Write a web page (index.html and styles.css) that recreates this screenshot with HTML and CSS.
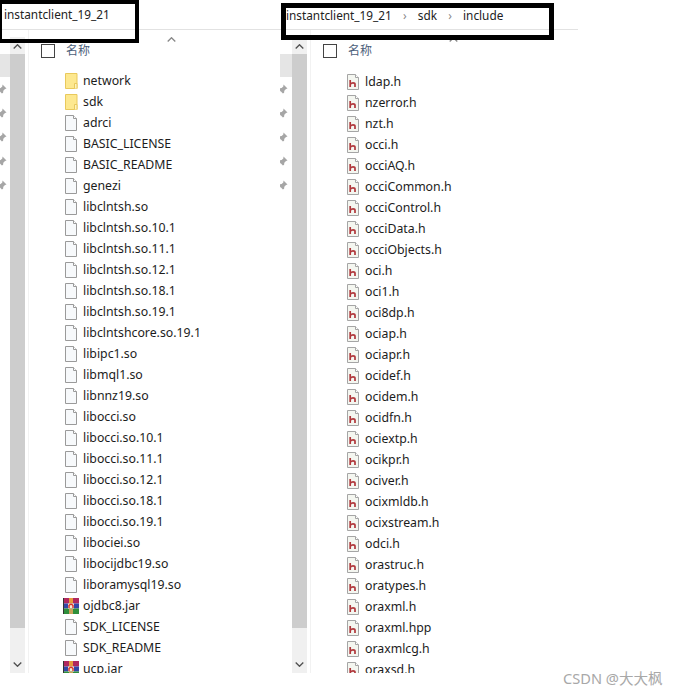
FILE: index.html
```html
<!DOCTYPE html>
<html lang="zh-CN">
<head>
  <meta charset="UTF-8">
  <title>instantclient_19_21</title>
  <link rel="stylesheet" href="styles.css">
</head>
<body>
  <!-- Shared icons -->
  <svg class="icon-defs" aria-hidden="true">
    <symbol id="i-folder" viewBox="0 0 16 16">
      <path d="M2.500 0.500h11.500v15h-11.500z" fill="#fde88f" stroke="#e9c95c"/>
      <path d="M11.500 15.500v-5h2.500v5" fill="#fdf3bf" stroke="#e9c95c"/>
    </symbol>
    <symbol id="i-file" viewBox="0 0 16 16">
      <path d="M2.500 0.500h8l3 3v12h-11z" fill="#f7f9fb" stroke="#9a9a9a"/>
      <path d="M10.500 0.500v3h3" fill="#fff" stroke="#9a9a9a"/>
    </symbol>
    <symbol id="i-header" viewBox="0 0 16 16">
      <path d="M2.500 0.500h8l3 3v12h-11z" fill="#f4f6f0" stroke="#a5a5a5"/>
      <path d="M10.500 0.500v3h3" fill="#fff" stroke="#a5a5a5"/>
      <path d="M5.200 6v7M5.500 10q1-1.200 2.500-1.200q2 0 2 1.500v2.700" fill="none" stroke="#b0383c" stroke-width="1.700"/>
    </symbol>
    <symbol id="i-rar" viewBox="0 0 16 16">
      <rect x="0" y="0" width="16" height="5.500" fill="#b0285f"/>
      <rect x="0" y="5.500" width="16" height="5" fill="#3346a8"/>
      <rect x="0" y="10.500" width="16" height="5.500" fill="#2f8f3c"/>
      <rect x="0" y="0" width="1" height="16" fill="#333"/>
      <rect x="6" y="0" width="4" height="5.500" fill="#e89a3c"/>
      <rect x="5" y="5.500" width="6" height="5" fill="#f6ecd6"/>
      <rect x="6" y="10.500" width="4" height="5.500" fill="#c9a25a"/>
      <path d="M6 10v-2.500q2-2.500 4 0v2.500" fill="none" stroke="#d9302a" stroke-width="1.400"/>
    </symbol>
    <symbol id="i-pin" viewBox="0 0 10 10">
      <path d="M5.500 0.500l4 4-1.500 .6-1.700 1.700-.2 2-1.200 .7-4-4 .7-1.200 2-.2 1.700-1.700z" fill="#a6a6a6"/>
      <path d="M2.500 6.500l-2.500 3" stroke="#a6a6a6" fill="none"/>
    </symbol>
    <symbol id="i-chev" viewBox="0 0 9 5">
      <path d="M0.700 4.500l3.800-3.800 3.800 3.800" fill="none" stroke="currentColor" stroke-width="1.300"/>
    </symbol>
  </svg>

  <div class="shot">
    <!-- Left window -->
    <section class="pane pane-main">
      <div class="pane-rule"></div>
      <div class="crumb crumb-main">
        <span>instantclient_19_21</span>
      </div>
      <div class="pane-body">
        <div class="nav-strip">
          <div class="nav-selected"></div>
          <svg class="pin"><use href="#i-pin"/></svg>
          <svg class="pin"><use href="#i-pin"/></svg>
          <svg class="pin"><use href="#i-pin"/></svg>
          <svg class="pin"><use href="#i-pin"/></svg>
          <svg class="pin"><use href="#i-pin"/></svg>
        </div>
        <div class="scrollbar">
          <div class="scroll-btn"><svg class="chev"><use href="#i-chev"/></svg></div>
          <div class="scroll-thumb"></div>
          <div class="scroll-rest"><svg class="chev chev-down"><use href="#i-chev"/></svg></div>
        </div>
        <div class="files">
          <div class="files-head">
            <span class="check"></span>
            <span class="col-name">名称</span>
            <svg class="chev sort"><use href="#i-chev"/></svg>
          </div>
          <ul class="file-list">
            <li><svg class="ficon"><use href="#i-folder"/></svg>network</li>
            <li><svg class="ficon"><use href="#i-folder"/></svg>sdk</li>
            <li><svg class="ficon"><use href="#i-file"/></svg>adrci</li>
            <li><svg class="ficon"><use href="#i-file"/></svg>BASIC_LICENSE</li>
            <li><svg class="ficon"><use href="#i-file"/></svg>BASIC_README</li>
            <li><svg class="ficon"><use href="#i-file"/></svg>genezi</li>
            <li><svg class="ficon"><use href="#i-file"/></svg>libclntsh.so</li>
            <li><svg class="ficon"><use href="#i-file"/></svg>libclntsh.so.10.1</li>
            <li><svg class="ficon"><use href="#i-file"/></svg>libclntsh.so.11.1</li>
            <li><svg class="ficon"><use href="#i-file"/></svg>libclntsh.so.12.1</li>
            <li><svg class="ficon"><use href="#i-file"/></svg>libclntsh.so.18.1</li>
            <li><svg class="ficon"><use href="#i-file"/></svg>libclntsh.so.19.1</li>
            <li><svg class="ficon"><use href="#i-file"/></svg>libclntshcore.so.19.1</li>
            <li><svg class="ficon"><use href="#i-file"/></svg>libipc1.so</li>
            <li><svg class="ficon"><use href="#i-file"/></svg>libmql1.so</li>
            <li><svg class="ficon"><use href="#i-file"/></svg>libnnz19.so</li>
            <li><svg class="ficon"><use href="#i-file"/></svg>libocci.so</li>
            <li><svg class="ficon"><use href="#i-file"/></svg>libocci.so.10.1</li>
            <li><svg class="ficon"><use href="#i-file"/></svg>libocci.so.11.1</li>
            <li><svg class="ficon"><use href="#i-file"/></svg>libocci.so.12.1</li>
            <li><svg class="ficon"><use href="#i-file"/></svg>libocci.so.18.1</li>
            <li><svg class="ficon"><use href="#i-file"/></svg>libocci.so.19.1</li>
            <li><svg class="ficon"><use href="#i-file"/></svg>libociei.so</li>
            <li><svg class="ficon"><use href="#i-file"/></svg>libocijdbc19.so</li>
            <li><svg class="ficon"><use href="#i-file"/></svg>liboramysql19.so</li>
            <li><svg class="ficon"><use href="#i-rar"/></svg>ojdbc8.jar</li>
            <li><svg class="ficon"><use href="#i-file"/></svg>SDK_LICENSE</li>
            <li><svg class="ficon"><use href="#i-file"/></svg>SDK_README</li>
            <li><svg class="ficon"><use href="#i-rar"/></svg>ucp.jar</li>
          </ul>
        </div>
      </div>
    </section>

    <!-- Right window -->
    <section class="pane pane-sdk">
      <div class="pane-rule"></div>
      <div class="crumb crumb-sdk">
        <span>instantclient_19_21</span>
        <span class="crumb-sep">&#x203A;</span>
        <span>sdk</span>
        <span class="crumb-sep">&#x203A;</span>
        <span>include</span>
      </div>
      <div class="pane-body">
        <div class="nav-strip">
          <div class="nav-selected"></div>
          <svg class="pin"><use href="#i-pin"/></svg>
          <svg class="pin"><use href="#i-pin"/></svg>
          <svg class="pin"><use href="#i-pin"/></svg>
          <svg class="pin"><use href="#i-pin"/></svg>
          <svg class="pin"><use href="#i-pin"/></svg>
        </div>
        <div class="scrollbar">
          <div class="scroll-btn"><svg class="chev"><use href="#i-chev"/></svg></div>
          <div class="scroll-thumb"></div>
          <div class="scroll-rest"><svg class="chev chev-down"><use href="#i-chev"/></svg></div>
        </div>
        <div class="files">
          <div class="files-head">
            <span class="check"></span>
            <span class="col-name">名称</span>
            <svg class="chev sort"><use href="#i-chev"/></svg>
          </div>
          <ul class="file-list">
            <li><svg class="ficon"><use href="#i-header"/></svg>ldap.h</li>
            <li><svg class="ficon"><use href="#i-header"/></svg>nzerror.h</li>
            <li><svg class="ficon"><use href="#i-header"/></svg>nzt.h</li>
            <li><svg class="ficon"><use href="#i-header"/></svg>occi.h</li>
            <li><svg class="ficon"><use href="#i-header"/></svg>occiAQ.h</li>
            <li><svg class="ficon"><use href="#i-header"/></svg>occiCommon.h</li>
            <li><svg class="ficon"><use href="#i-header"/></svg>occiControl.h</li>
            <li><svg class="ficon"><use href="#i-header"/></svg>occiData.h</li>
            <li><svg class="ficon"><use href="#i-header"/></svg>occiObjects.h</li>
            <li><svg class="ficon"><use href="#i-header"/></svg>oci.h</li>
            <li><svg class="ficon"><use href="#i-header"/></svg>oci1.h</li>
            <li><svg class="ficon"><use href="#i-header"/></svg>oci8dp.h</li>
            <li><svg class="ficon"><use href="#i-header"/></svg>ociap.h</li>
            <li><svg class="ficon"><use href="#i-header"/></svg>ociapr.h</li>
            <li><svg class="ficon"><use href="#i-header"/></svg>ocidef.h</li>
            <li><svg class="ficon"><use href="#i-header"/></svg>ocidem.h</li>
            <li><svg class="ficon"><use href="#i-header"/></svg>ocidfn.h</li>
            <li><svg class="ficon"><use href="#i-header"/></svg>ociextp.h</li>
            <li><svg class="ficon"><use href="#i-header"/></svg>ocikpr.h</li>
            <li><svg class="ficon"><use href="#i-header"/></svg>ociver.h</li>
            <li><svg class="ficon"><use href="#i-header"/></svg>ocixmldb.h</li>
            <li><svg class="ficon"><use href="#i-header"/></svg>ocixstream.h</li>
            <li><svg class="ficon"><use href="#i-header"/></svg>odci.h</li>
            <li><svg class="ficon"><use href="#i-header"/></svg>orastruc.h</li>
            <li><svg class="ficon"><use href="#i-header"/></svg>oratypes.h</li>
            <li><svg class="ficon"><use href="#i-header"/></svg>oraxml.h</li>
            <li><svg class="ficon"><use href="#i-header"/></svg>oraxml.hpp</li>
            <li><svg class="ficon"><use href="#i-header"/></svg>oraxmlcg.h</li>
            <li><svg class="ficon"><use href="#i-header"/></svg>oraxsd.h</li>
          </ul>
        </div>
      </div>
    </section>
  </div>

  <div class="watermark">CSDN @大大枫</div>
</body>
</html>
```

FILE: styles.css
```css
/* Two Explorer windows pasted side by side */
body {
  margin: 0;
  position: relative;
  height: 694px;
  overflow: hidden;
  background: #fff;
  color: #1c1c1c;
  font-family: 'Noto Sans', 'Noto Sans CJK SC', sans-serif;
  font-size: 12.3px;
}

.icon-defs {
  display: none;
}

.shot {
  display: flex;
  width: 578px;
  height: 673px;
}

.pane {
  position: relative;
  display: flex;
  flex-direction: column;
  height: 100%;
  overflow: hidden;
}

.pane-main {
  width: 280px;
}

.pane-sdk {
  width: 298px;
}

.pane-rule {
  flex: none;
  height: 29px;
  border-bottom: 1px solid #e2e2e2;
}

/* Black annotation boxes over the address bar */
.crumb {
  position: absolute;
  display: flex;
  align-items: flex-start;
  box-sizing: border-box;
  border-style: solid;
  border-color: #000;
  font-size: 11.8px;
  line-height: 18px;
  color: #222;
}

.crumb-main {
  top: 0;
  left: -2px;
  width: 141px;
  height: 43px;
  border-width: 4px;
  padding: 1px 0 0 2px;
}

.crumb-sdk {
  top: 3px;
  left: 1px;
  width: 273px;
  height: 37px;
  border-width: 5px;
  gap: 9.500px;
  line-height: 14px;
}

.crumb-sep {
  width: 7px;
  text-align: center;
  color: #888;
}

.pane-body {
  flex: 1;
  display: flex;
  min-height: 0;
}

/* Navigation pane remains */
.nav-strip {
  flex: none;
  width: 10px;
  padding-top: 24px;
  overflow: hidden;
}

.pane-sdk .nav-strip {
  width: 12px;
}

.nav-selected {
  height: 23px;
  margin-bottom: 7px;
  background: #e5e5e5;
}

.pin {
  display: block;
  width: 10px;
  height: 10px;
  margin: 0 0 14px -3px;
}

.pane-sdk .pin {
  margin-left: -2px;
}

.scrollbar {
  flex: none;
  display: flex;
  flex-direction: column;
  align-items: center;
  width: 15px;
  margin-top: 7px;
  background: #f0f0f0;
  color: #505050;
}

.scroll-btn {
  flex: none;
  height: 17px;
  padding-top: 7px;
  box-sizing: border-box;
}

.scroll-thumb {
  flex: none;
  align-self: stretch;
  height: 574px;
  background: #cdcdcd;
}

.scroll-rest {
  flex: 1;
  display: flex;
  align-items: flex-end;
  padding-bottom: 6px;
}

.chev {
  display: block;
  width: 9px;
  height: 5px;
}

.chev-down {
  transform: rotate(180deg);
}

.files {
  flex: 1;
  min-width: 0;
  margin-left: 3px;
  padding-left: 12px;
  border-left: 1px solid #f2f2f2;
}

.files-head {
  display: flex;
  align-items: flex-start;
  height: 40px;
}

.pane-sdk .files-head {
  height: 41px;
}

.check {
  width: 12px;
  height: 12px;
  margin-top: 14px;
  border: 1px solid #444;
}

.col-name {
  margin: 12px 0 0 11px;
  line-height: 18px;
  font-size: 12px;
  color: #4c607a;
}

.sort {
  margin: 7px 0 0 77px;
  color: #888;
}

.file-list {
  list-style: none;
  margin: 0 0 0 22px;
  padding: 0;
}

.file-list li {
  display: flex;
  align-items: center;
  gap: 4px;
  height: 21px;
  white-space: nowrap;
}

.ficon {
  flex: none;
  width: 16px;
  height: 16px;
}

.watermark {
  position: absolute;
  top: 669px;
  left: 563px;
  font-size: 14.600px;
  line-height: 18px;
  color: #a8a8a8;
  white-space: nowrap;
}
```
